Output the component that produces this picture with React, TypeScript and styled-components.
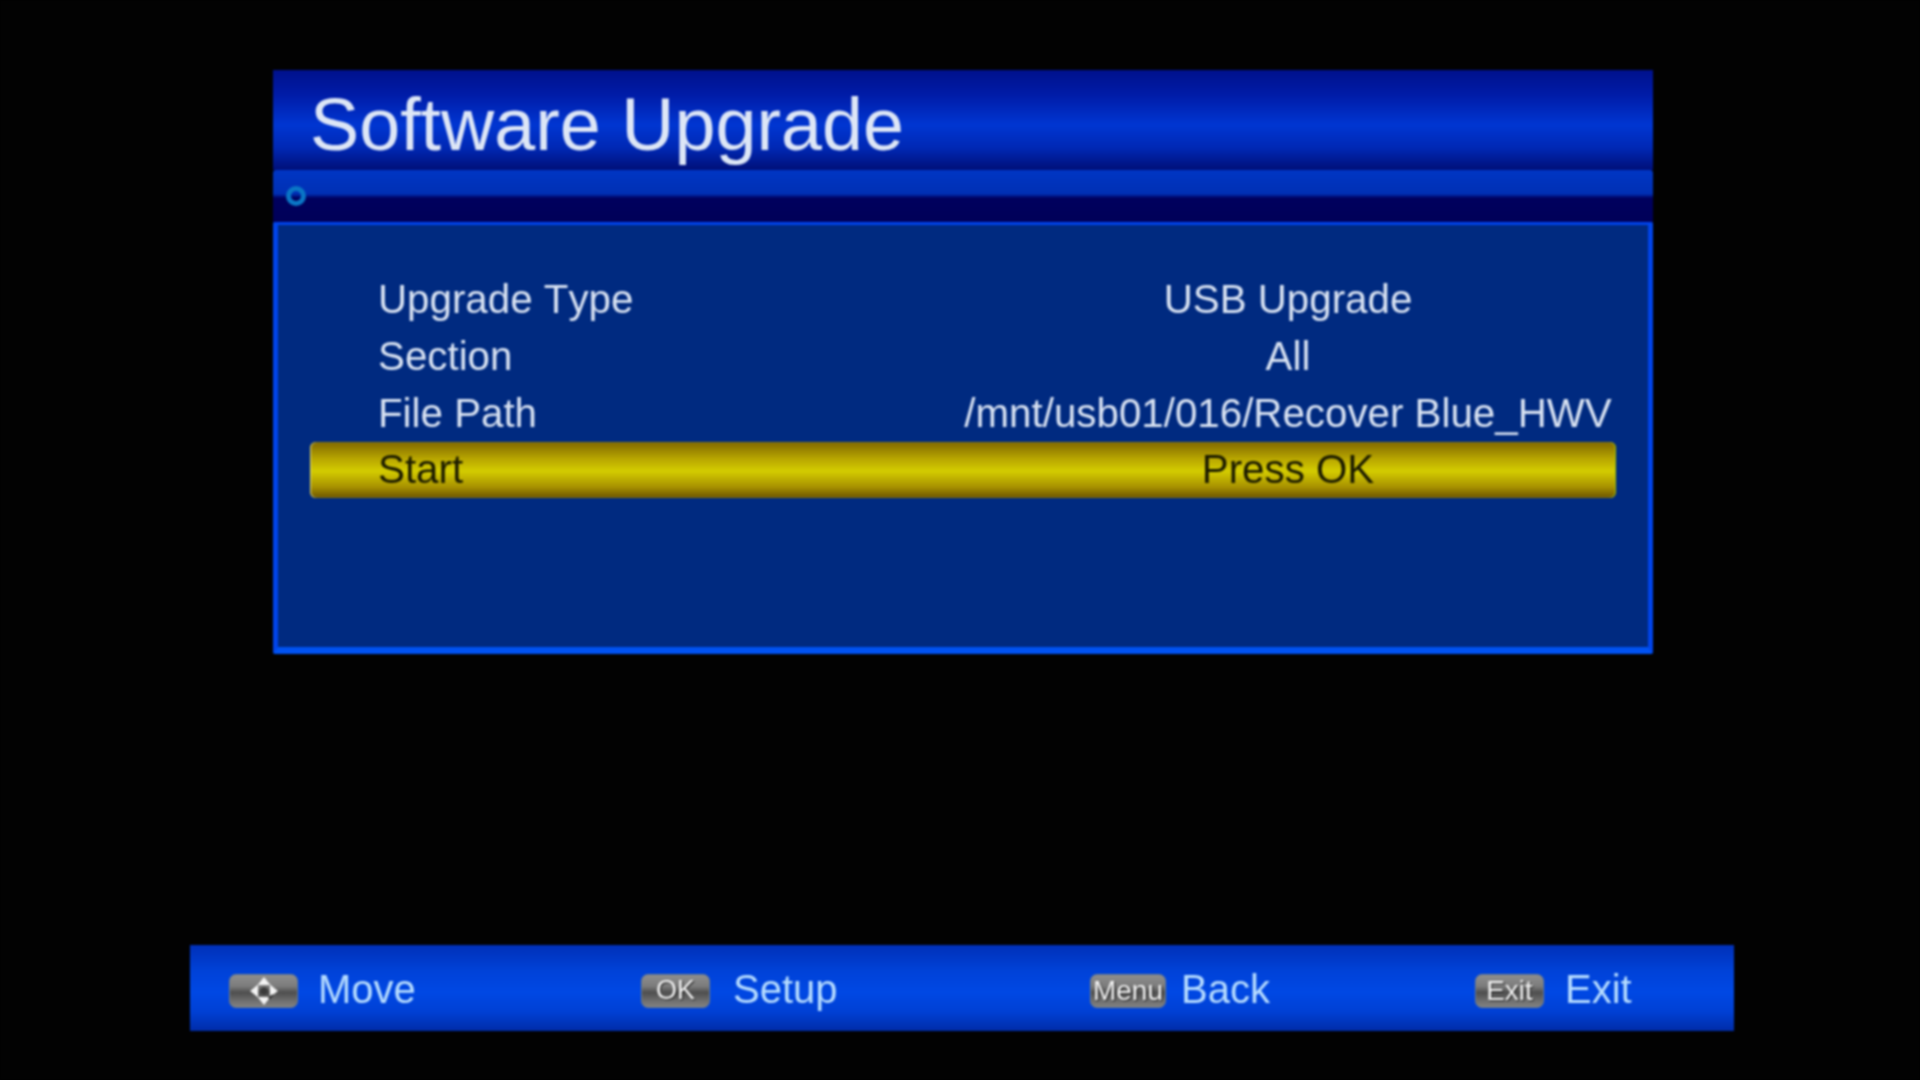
import styled, { createGlobalStyle } from 'styled-components';

const GlobalStyle = createGlobalStyle`
  html, body {
    margin: 0;
    background: #000;
  }
`;

const Screen = styled.div`
  width: 1920px;
  height: 1080px;
  background: #020202;
  overflow: hidden;
  display: flex;
  flex-direction: column;
  font-family: "Liberation Sans", Arial, sans-serif;
  font-kerning: none;
  filter: blur(0.8px);
`;

const Window = styled.section`
  width: 1380px;
  margin: 70px 0 0 273px;
  display: flex;
  flex-direction: column;
`;

const TitleBar = styled.header`
  height: 100px;
  box-sizing: border-box;
  padding: 8px 0 0 37px;
  display: flex;
  align-items: center;
  background: linear-gradient(180deg, #00118c 0%, #001ca8 25%, #0036d2 55%, #0028b4 78%, #000f78 100%);
`;

const Title = styled.h1`
  margin: 0;
  font-size: 73.7px;
  font-weight: 400;
  color: #dde6f6;
`;

const PathBar = styled.div`
  height: 52px;
  box-sizing: border-box;
  padding-left: 13px;
  display: flex;
  align-items: center;
  border-radius: 3px 3px 0 0;
  background: linear-gradient(180deg, #0036c4 0%, #0030b4 46%, #00005e 54%, #000058 100%);
`;

const Ring = styled.span`
  width: 20px;
  height: 20px;
  box-sizing: border-box;
  border: 5px solid #0a76c6;
  border-radius: 50%;
`;

const Panel = styled.div`
  height: 432px;
  box-sizing: border-box;
  padding: 46px 32px 0 32px;
  background: #002a80;
  border: solid #0044ea;
  border-width: 3px 5px 7px;
  border-bottom-color: #0052f2;
  border-radius: 2px;
`;

const Row = styled.div<{ $active?: boolean }>`
  height: ${({ $active }) => ($active ? 56 : 57)}px;
  display: grid;
  grid-template-columns: 650px 1fr;
  align-items: center;
  font-size: 40.3px;
  color: ${({ $active }) => ($active ? '#1a1a00' : '#d8e2f2')};
  border-radius: 6px;
  background: ${({ $active }) => ($active
    ? 'linear-gradient(180deg, #806800 0%, #b8a600 30%, #d4cc00 52%, #a89200 80%, #6c5400 100%)'
    : 'none')};
  box-shadow: ${({ $active }) => ($active
    ? 'inset 1px 0 1px #d8d080, inset -1px 0 1px #a0c000'
    : 'none')};
`;

const Label = styled.span`
  padding-left: 68px;
`;

const Value = styled.span`
  text-align: center;
  white-space: nowrap;
`;

const Footer = styled.footer`
  width: 1544px;
  height: 86px;
  box-sizing: border-box;
  margin: 291px 0 0 190px;
  padding-left: 39px;
  display: grid;
  grid-template-columns: 412px 449px 385px 1fr;
  align-items: center;
  background: linear-gradient(180deg, #0030b8 0%, #0042d8 30%, #0048e4 55%, #0040d4 78%, #002ca8 100%);
`;

const Hint = styled.div<{ $gap: number }>`
  padding-top: 2px;
  display: flex;
  align-items: center;
  gap: ${({ $gap }) => $gap}px;
  font-size: 40px;
  color: #b6dcff;
`;

const Key = styled.span<{ $width?: number; $size?: number }>`
  width: ${({ $width }) => $width ?? 69}px;
  height: 34px;
  margin-top: 3px;
  display: flex;
  align-items: center;
  justify-content: center;
  font-size: ${({ $size }) => $size ?? 27}px;
  color: #f4f4f4;
  text-shadow: 1px 1px 1px #222;
  border-radius: 7px;
  border: 1px solid #6c7a88;
  box-sizing: border-box;
  background: linear-gradient(180deg, #8e8e8e 0%, #7c7c7c 35%, #4e4e4e 55%, #6e6e6e 80%, #828282 100%);
`;

const MoveIcon = () => (
  <svg width="30" height="30" viewBox="0 0 28 28">
    <path d="M14 1l6 7.5H8z" fill="#f4f4f4" />
    <path d="M14 27l-6-7.5h12z" fill="#f4f4f4" />
    <path d="M1 14l7.5-6v12z" fill="#f4f4f4" />
    <path d="M27 14l-7.5 6V8z" fill="#f4f4f4" />
    <circle cx="14" cy="14" r="3.5" fill="#3a3a3a" />
    <path d="M18 20l4-3 1 1-4 4z" fill="#2a2a2a" />
  </svg>
);

const rows = [
  { label: 'Upgrade Type', value: 'USB Upgrade' },
  { label: 'Section', value: 'All' },
  { label: 'File Path', value: '/mnt/usb01/016/Recover Blue_HWV' },
  { label: 'Start', value: 'Press OK', active: true },
];

export default function App() {
  return (
    <>
      <GlobalStyle />
      <Screen>
        <Window>
          <TitleBar>
            <Title>Software Upgrade</Title>
          </TitleBar>
          <PathBar>
            <Ring />
          </PathBar>
          <Panel>
            {rows.map((row) => (
              <Row key={row.label} $active={row.active}>
                <Label>{row.label}</Label>
                <Value>{row.value}</Value>
              </Row>
            ))}
          </Panel>
        </Window>
        <Footer>
          <Hint $gap={20}>
            <Key><MoveIcon /></Key>
            Move
          </Hint>
          <Hint $gap={23}>
            <Key>OK</Key>
            Setup
          </Hint>
          <Hint $gap={15}>
            <Key $width={76} $size={28}>Menu</Key>
            Back
          </Hint>
          <Hint $gap={21}>
            <Key $size={28}>Exit</Key>
            Exit
          </Hint>
        </Footer>
      </Screen>
    </>
  );
}
